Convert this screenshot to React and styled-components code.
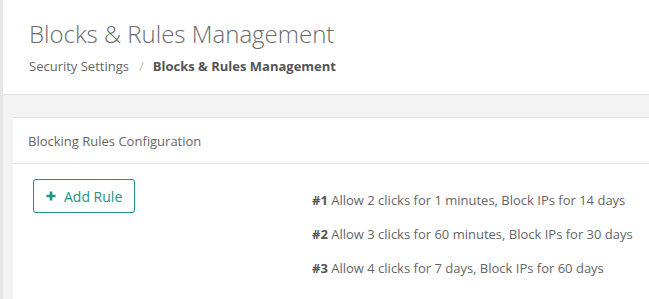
import React from "react";
import styled, { createGlobalStyle } from "styled-components";

const GlobalStyle = createGlobalStyle`
  html, body {
    margin: 0;
    padding: 0;
    height: 100%;
    background: #f3f3f3;
    font-family: "Open Sans", "Liberation Sans", sans-serif;
    overflow: hidden;
  }
`;

const rules = [
  { n: 1, text: "Allow 2 clicks for 1 minutes, Block IPs for 14 days" },
  { n: 2, text: "Allow 3 clicks for 60 minutes, Block IPs for 30 days" },
  { n: 3, text: "Allow 4 clicks for 7 days, Block IPs for 60 days" },
];

function PlusIcon() {
  return (
    <svg width="10" height="10" viewBox="0 0 10 10">
      <path d="M5 0.5v9M0.5 5h9" stroke="currentColor" strokeWidth="2.6" />
    </svg>
  );
}

export default function App() {
  return (
    <>
      <GlobalStyle />
      <Layout>
        <Sidebar />
        <Main>
          <PageHeader>
            <Title>Blocks &amp; Rules Management</Title>
            <Breadcrumb>
              <Crumb>Security Settings</Crumb>
              <Sep>/</Sep>
              <Crumb $active>Blocks &amp; Rules Management</Crumb>
            </Breadcrumb>
          </PageHeader>
          <Content>
            <Card>
              <CardHeader>Blocking Rules Configuration</CardHeader>
              <CardBody>
                <ActionCol>
                  <AddButton>
                    <PlusIcon />
                    Add Rule
                  </AddButton>
                </ActionCol>
                <RuleList>
                  {rules.map((r) => (
                    <Rule key={r.n}>
                      <b>#{r.n}</b> {r.text}
                    </Rule>
                  ))}
                </RuleList>
              </CardBody>
            </Card>
          </Content>
        </Main>
      </Layout>
    </>
  );
}

const Layout = styled.div`
  display: flex;
  height: 299px;
`;

const Sidebar = styled.div`
  width: 3px;
  flex: none;
  background: #e6e6e6;
`;

const Main = styled.div`
  flex: 1;
  display: flex;
  flex-direction: column;
  min-width: 0;
`;

const PageHeader = styled.div`
  background: #fff;
  border-bottom: 1px solid #e4e4e4;
  padding: 17px 26px 0;
  height: 77px;
`;

const Title = styled.h1`
  margin: 0;
  font-size: 24px;
  font-weight: 300;
  color: #6b6b6b;
  line-height: 34px;
`;

const Breadcrumb = styled.div`
  display: flex;
  align-items: center;
  margin-top: 5px;
  font-size: 13px;
  line-height: 20px;
`;

const Crumb = styled.span`
  color: ${(p) => (p.$active ? "#555" : "#666")};
  font-weight: ${(p) => (p.$active ? 700 : 400)};
`;

const Sep = styled.span`
  color: #bbb;
  margin: 0 9px 0 10px;
`;

const Content = styled.div`
  flex: 1;
  padding: 22px 0 0 10px;
`;

const Card = styled.div`
  background: #fff;
  border-top: 1px solid #e2e2e2;
  height: 100%;
`;

const CardHeader = styled.div`
  height: 45px;
  display: flex;
  align-items: center;
  padding: 0 15px;
  border-bottom: 1px solid #e6e6e6;
  font-size: 13px;
  color: #666;
`;

const CardBody = styled.div`
  display: flex;
  padding: 15px 20px;
`;

const ActionCol = styled.div`
  width: 279px;
  flex: none;
`;

const AddButton = styled.button`
  display: inline-flex;
  align-items: center;
  gap: 8px;
  height: 34px;
  padding: 0 12px 0 12px;
  box-sizing: border-box;
  white-space: nowrap;
  background: #fff;
  border: 1px solid #1b9486;
  border-radius: 3px;
  color: #1b9486;
  font-family: inherit;
  font-size: 14px;
  cursor: pointer;
`;

const RuleList = styled.div`
  display: flex;
  flex-direction: column;
  padding-top: 11px;
  row-gap: 14px;
`;

const Rule = styled.div`
  font-size: 13px;
  line-height: 20px;
  color: #666;
  white-space: nowrap;

  b {
    color: #555;
  }
`;
